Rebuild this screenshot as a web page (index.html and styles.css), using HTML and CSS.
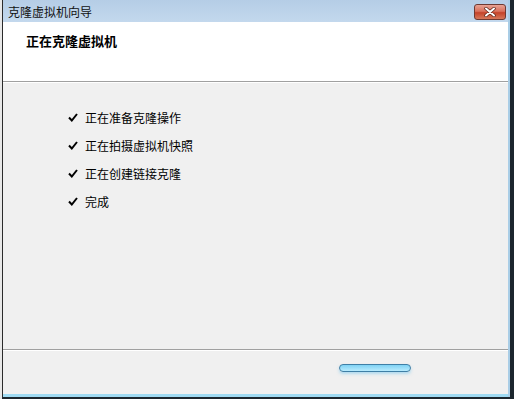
FILE: index.html
```html
<!DOCTYPE html>
<html lang="zh-CN">
  <head>
    <meta charset="UTF-8" />
    <meta name="viewport" content="width=device-width, initial-scale=1.0" />
    <title>克隆虚拟机向导</title>
    <link rel="stylesheet" href="styles.css">
  </head>
  <body>
    <div class="edge"></div>
    <div class="window">
      <div class="titlebar">
        <span class="title">克隆虚拟机向导</span>
        <button type="button" class="close-btn">
          <svg width="14" height="10" viewBox="0 0 14 10">
            <path d="M3 1.5 L11 8.5 M11 1.5 L3 8.5" stroke="#5a2418" stroke-width="3.4" stroke-linecap="round" />
            <path d="M3 1.5 L11 8.5 M11 1.5 L3 8.5" stroke="#ffffff" stroke-width="2" stroke-linecap="round" />
          </svg>
        </button>
      </div>
      <div class="header">
        <h1>正在克隆虚拟机</h1>
      </div>
      <div class="content">
        <ul class="steps">
          <li><svg class="check" width="10" height="9" viewBox="0 0 10 9"><path d="M1 4.5 L3.8 7.5 L9 1" fill="none" stroke="#000" stroke-width="2" /></svg>正在准备克隆操作</li>
          <li><svg class="check" width="10" height="9" viewBox="0 0 10 9"><path d="M1 4.5 L3.8 7.5 L9 1" fill="none" stroke="#000" stroke-width="2" /></svg>正在拍摄虚拟机快照</li>
          <li><svg class="check" width="10" height="9" viewBox="0 0 10 9"><path d="M1 4.5 L3.8 7.5 L9 1" fill="none" stroke="#000" stroke-width="2" /></svg>正在创建链接克隆</li>
          <li><svg class="check" width="10" height="9" viewBox="0 0 10 9"><path d="M1 4.5 L3.8 7.5 L9 1" fill="none" stroke="#000" stroke-width="2" /></svg>完成</li>
        </ul>
      </div>
      <div class="footer">
        <div class="progress-pill"></div>
      </div>
    </div>
  </body>
</html>
```

FILE: styles.css
```css
body {
  margin: 0;
  height: 399px;
  display: flex;
  background-color: #1c262e;
  font-family: "Noto Sans CJK SC", "Liberation Sans", sans-serif;
  overflow: hidden;
}
.edge {
  width: 2px;
  background-color: #e8e8e8;
}
.window {
  width: 505px;
  height: 397px;
  display: flex;
  flex-direction: column;
  border-left: 1px solid #2b2b2b;
  border-right: 2px solid #a9cde6;
  background-color: #f0f0f0;
}
.titlebar {
  height: 22px;
  display: flex;
  align-items: center;
  justify-content: space-between;
  padding: 0 2px 0 5px;
  background: linear-gradient(#b5cde6, #c3d8ed);
}
.title {
  font-size: 12px;
  color: #111;
}
.close-btn {
  width: 32px;
  height: 16px;
  margin-top: 2px;
  padding: 0;
  display: flex;
  align-items: center;
  justify-content: center;
  border: 1px solid #6e3a32;
  border-radius: 3px;
  background: linear-gradient(#e8a394 0%, #d9715c 45%, #c4432a 55%, #d6785a 100%);
}
.header {
  height: 59px;
  background-color: #ffffff;
  border-bottom: 1px solid #a0a0a0;
  box-shadow: 0 1px 0 #ffffff;
}
.header h1 {
  margin: 0;
  padding: 9px 0 0 23px;
  font-size: 13px;
  font-weight: bold;
  color: #000;
}
.content {
  flex: 1;
  border-bottom: 1px solid #a0a0a0;
  box-shadow: 0 1px 0 #ffffff;
}
.steps {
  list-style: none;
  margin: 0;
  padding: 21px 0 0 65px;
}
.steps li {
  height: 28px;
  display: flex;
  align-items: center;
  font-size: 12px;
  color: #000;
}
.check {
  margin-right: 7px;
}
.footer {
  height: 47px;
  padding: 14px 0 0 336px;
  box-sizing: border-box;
  border-bottom: 3px solid #9fdaf2;
}
.progress-pill {
  width: 70px;
  height: 6px;
  border: 1px solid #3f7fa6;
  border-radius: 4px;
  background: linear-gradient(#7fd2f4, #b8ebfd);
  box-shadow: 0 2px 3px rgba(120, 200, 240, 0.5);
}
```
